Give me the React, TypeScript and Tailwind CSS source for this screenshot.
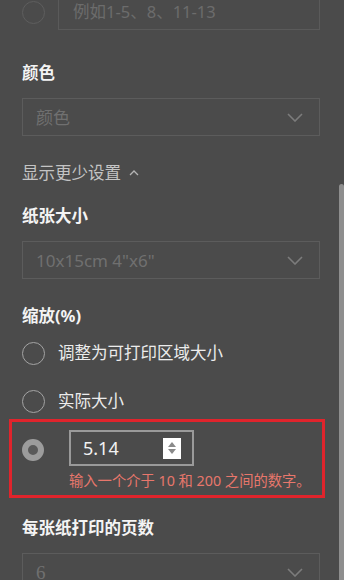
const font = "font-['Noto_Sans','Noto_Sans_CJK_SC',sans-serif]";

function Chevron() {
  return (
    <svg width="16" height="9" viewBox="0 0 16 9" className="shrink-0">
      <polyline points="1,1 8,8 15,1" fill="none" stroke="#7c7c7c" strokeWidth="1.6" />
    </svg>
  );
}

function Select({ value, serif }: { value: string; serif?: boolean }) {
  return (
    <div className="mt-[13px] ml-[22px] w-[298px] h-[38px] border border-[#5c5c5c] flex items-center justify-between pl-[13px] pr-[16px]">
      <span
        className={`text-[17px] leading-none text-[#707070] ${
          serif ? "font-['Liberation_Serif',serif] text-[19px]" : ""
        }`}
      >
        {value}
      </span>
      <Chevron />
    </div>
  );
}

function Label({ children, className = "" }: { children: string; className?: string }) {
  return (
    <div className={`px-[22px] h-[24px] leading-[24px] text-[16.5px] font-bold text-[#f4f4f4] ${className}`}>
      {children}
    </div>
  );
}

function Radio({ label, className = "" }: { label: string; className?: string }) {
  return (
    <div className={`flex items-center h-[24px] pl-[22px] ${className}`}>
      <span className="w-[23px] h-[23px] rounded-full border-[1.5px] border-[#a3a3a3] shrink-0" />
      <span className="ml-[13px] text-[16.5px] leading-[24px] text-[#ececec]">{label}</span>
    </div>
  );
}

export default function App() {
  return (
    <div className={`relative w-[344px] h-[580px] overflow-hidden bg-[#4b4b4b] ${font}`}>
      <div className="flex items-center pl-[22px] mt-[-7px] h-[37px]">
        <span className="w-[23px] h-[23px] rounded-full border-[1.5px] border-[#5e5e5e] shrink-0 mt-[2px]" />
        <div className="ml-[13px] w-[262px] h-[37px] border border-[#5a5a5a] flex items-center pl-[14px]">
          <span className="text-[16.5px] leading-none text-[#6c6c6c] pt-[2px]">例如1-5、8、11-13</span>
        </div>
      </div>

      <Label className="mt-[31px]">颜色</Label>
      <Select value="颜色" />

      <div className="mt-[25px] px-[22px] h-[24px] flex items-center gap-[8px]">
        <span className="text-[16.5px] leading-[24px] text-[#c4c4c4]">显示更少设置</span>
        <svg width="10" height="6" viewBox="0 0 10 6">
          <polyline points="1,5 5,1 9,5" fill="none" stroke="#b4b4b4" strokeWidth="1.3" />
        </svg>
      </div>

      <Label className="mt-[19px]">纸张大小</Label>
      <Select value={'10x15cm 4"x6"'} />

      <Label className="mt-[25px]">缩放(%)</Label>
      <Radio label="调整为可打印区域大小" className="mt-[13px]" />
      <Radio label="实际大小" className="mt-[24px]" />

      <div className="mt-[6px] ml-[9px] w-[316px] h-[79px] border-[3px] border-[#e0242c] flex pl-[10px] pt-[8px]">
        <span className="mt-[9px] w-[22px] h-[22px] rounded-full border-[6px] border-[#9c9c9c] bg-[#5a5a5a] shrink-0" />
        <div className="ml-[25px] flex flex-col">
          <div className="w-[125px] h-[36px] border-2 border-[#9a9a9a] flex items-center justify-between pl-[12px] pr-[11px]">
            <span className="text-[18px] leading-none text-[#f2f2f2]">5.14</span>
            <span className="w-[18px] h-[21px] bg-white flex flex-col items-center justify-center gap-[2px]">
              <svg width="8" height="5" viewBox="0 0 8 5">
                <polygon points="4,0 8,5 0,5" fill="#8a8a8a" />
              </svg>
              <svg width="8" height="5" viewBox="0 0 8 5">
                <polygon points="0,0 8,0 4,5" fill="#8a8a8a" />
              </svg>
            </span>
          </div>
          <span className="mt-[5px] text-[14.3px] leading-[20px] text-[#e8776c] whitespace-nowrap">
            输入一个介于 10 和 200 之间的数字。
          </span>
        </div>
      </div>

      <Label className="mt-[18px]">每张纸打印的页数</Label>
      <Select value="6" serif />

      <div className="absolute right-0 top-[184px] bottom-0 w-[5px] rounded-t-full bg-[#8e8e8e]" />
    </div>
  );
}
